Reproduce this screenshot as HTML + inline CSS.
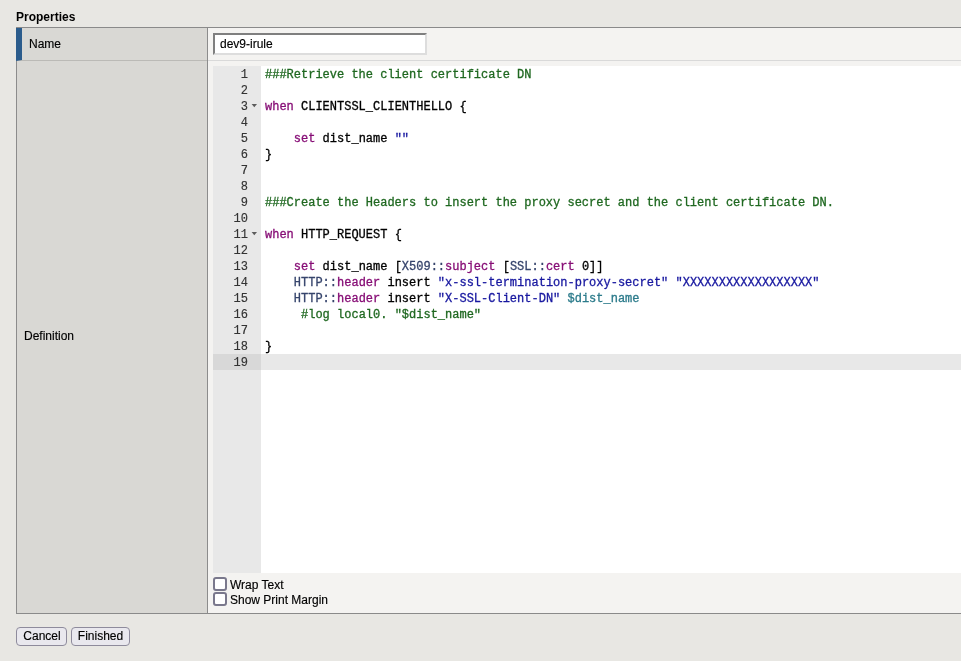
<!DOCTYPE html>
<html><head><meta charset="utf-8">
<style>
*{margin:0;padding:0;box-sizing:border-box}
html,body{width:961px;height:661px;overflow:hidden;background:#e8e7e3;font-family:"Liberation Sans",sans-serif;font-size:12px;color:#000}
.abs{position:absolute}
#title{left:16px;top:10px;font-weight:bold;font-size:12px;line-height:14px}
#tbl{left:16px;top:27px;width:945px;height:587px;border-top:1px solid #8a8a8a;border-bottom:1px solid #8a8a8a;border-left:1px solid #8c8c8c;background:#f4f3f1}
#lab1{left:16px;top:28px;width:191px;height:33px;background:#d9d8d4;border-left:6px solid #2b5c8c;border-bottom:1px solid #bbbab6}
#lab2{left:17px;top:61px;width:190px;height:552px;background:#d9d8d4}
#vdiv{left:207px;top:28px;width:1px;height:585px;background:#8c8c8c}
#hdiv{left:22px;top:60px;width:185px;height:1px;background:#bbbab6}
#hdiv2{left:208px;top:60px;width:753px;height:1px;background:#d9d9d9}
.lbl{font-size:12px;line-height:14px;-webkit-text-stroke:0.15px #000}
#input{left:213px;top:33px;width:214px;height:22px;background:#fff;border:2px solid;border-top-color:#7f7f7f;border-left-color:#7f7f7f;border-right-color:#dddddd;border-bottom-color:#dddddd;padding-left:5px;line-height:18px;-webkit-text-stroke:0.15px #000}
#editor{left:213px;top:66px;width:748px;height:507px;background:#fff;overflow:hidden}
#gutter{left:0;top:0;width:48px;height:507px;background:#e8e8e8}
.ln{position:absolute;left:0;width:35px;text-align:right;font-family:"Liberation Mono",monospace;font-size:12px;line-height:16px;color:#333;margin-top:1px;-webkit-text-stroke:0.15px #333}
.cl{position:absolute;left:52px;white-space:pre;font-family:"Liberation Mono",monospace;font-size:12px;line-height:16px;color:#000;margin-top:1px;-webkit-text-stroke:0.3px currentColor}
.c{color:#1f6820}.k{color:#870e76}.s{color:#1818a0}.v{color:#2c7b8b}.f{color:#36446c}
.fold{position:absolute;left:39px;width:0;height:0;border-left:2.5px solid transparent;border-right:2.5px solid transparent;border-top:3px solid #555}
#act1{left:0;top:288px;width:48px;height:16px;background:#d8d8d8}
#act2{left:48px;top:288px;width:700px;height:16px;background:#e8e8e8}
.cb{width:14px;height:14px;border:2px solid #7a788c;border-radius:3px;background:#fff}
.btn{height:19px;background:#e9e8ee;border:1px solid #8e8b9c;border-radius:4px;font-size:12px;line-height:17px;text-align:center;-webkit-text-stroke:0.15px #000}
</style></head><body><div id="root" style="position:absolute;left:0;top:0;width:961px;height:661px;will-change:transform">
<div class="abs" id="title">Properties</div>
<div class="abs" id="tbl"></div>
<div class="abs" id="lab2"></div>
<div class="abs" id="hdiv"></div>
<div class="abs" id="hdiv2"></div>
<div class="abs" id="vdiv"></div>
<div class="abs" id="lab1"></div>
<div class="abs lbl" style="left:29px;top:37px">Name</div>
<div class="abs lbl" style="left:24px;top:329px">Definition</div>
<div class="abs" id="input">dev9-irule</div>
<div class="abs" id="editor">
 <div class="abs" id="gutter"></div>
 <div class="abs" id="act1"></div>
 <div class="abs" id="act2"></div>
 <div class="ln" style="top:0">1</div>
 <div class="ln" style="top:16px">2</div>
 <div class="ln" style="top:32px">3</div>
 <div class="ln" style="top:48px">4</div>
 <div class="ln" style="top:64px">5</div>
 <div class="ln" style="top:80px">6</div>
 <div class="ln" style="top:96px">7</div>
 <div class="ln" style="top:112px">8</div>
 <div class="ln" style="top:128px">9</div>
 <div class="ln" style="top:144px">10</div>
 <div class="ln" style="top:160px">11</div>
 <div class="ln" style="top:176px">12</div>
 <div class="ln" style="top:192px">13</div>
 <div class="ln" style="top:208px">14</div>
 <div class="ln" style="top:224px">15</div>
 <div class="ln" style="top:240px">16</div>
 <div class="ln" style="top:256px">17</div>
 <div class="ln" style="top:272px">18</div>
 <div class="ln" style="top:288px">19</div>
 <svg class="abs" style="left:38px;top:37px" width="8" height="6"><polygon points="0.6,1 6,1 3.3,4.2" fill="#5c5c5c"/></svg>
 <svg class="abs" style="left:38px;top:165px" width="8" height="6"><polygon points="0.6,1 6,1 3.3,4.2" fill="#5c5c5c"/></svg>
 <div class="cl" style="top:0"><span class="c">###Retrieve the client certificate DN</span></div>
 <div class="cl" style="top:32px"><span class="k">when</span> CLIENTSSL_CLIENTHELLO {</div>
 <div class="cl" style="top:64px">    <span class="k">set</span> dist_name <span class="s">""</span></div>
 <div class="cl" style="top:80px">}</div>
 <div class="cl" style="top:128px"><span class="c">###Create the Headers to insert the proxy secret and the client certificate DN.</span></div>
 <div class="cl" style="top:160px"><span class="k">when</span> HTTP_REQUEST {</div>
 <div class="cl" style="top:192px">    <span class="k">set</span> dist_name [<span class="f">X509::</span><span class="k">subject</span> [<span class="f">SSL::</span><span class="k">cert</span> 0]]</div>
 <div class="cl" style="top:208px">    <span class="f">HTTP::</span><span class="k">header</span> insert <span class="s">"x-ssl-termination-proxy-secret"</span> <span class="s">"XXXXXXXXXXXXXXXXXX"</span></div>
 <div class="cl" style="top:224px">    <span class="f">HTTP::</span><span class="k">header</span> insert <span class="s">"X-SSL-Client-DN"</span> <span class="v">$dist_name</span></div>
 <div class="cl" style="top:240px">     <span class="c">#log local0. "$dist_name"</span></div>
 <div class="cl" style="top:272px">}</div>
</div>
<div class="abs cb" style="left:213px;top:577px"></div>
<div class="abs cb" style="left:213px;top:592px"></div>
<div class="abs lbl" style="left:230px;top:578px">Wrap Text</div>
<div class="abs lbl" style="left:230px;top:593px">Show Print Margin</div>
<div class="abs btn" style="left:16px;top:627px;width:51px;padding-left:1px">Cancel</div>
<div class="abs btn" style="left:71px;top:627px;width:59px">Finished</div>
</div></body></html>
